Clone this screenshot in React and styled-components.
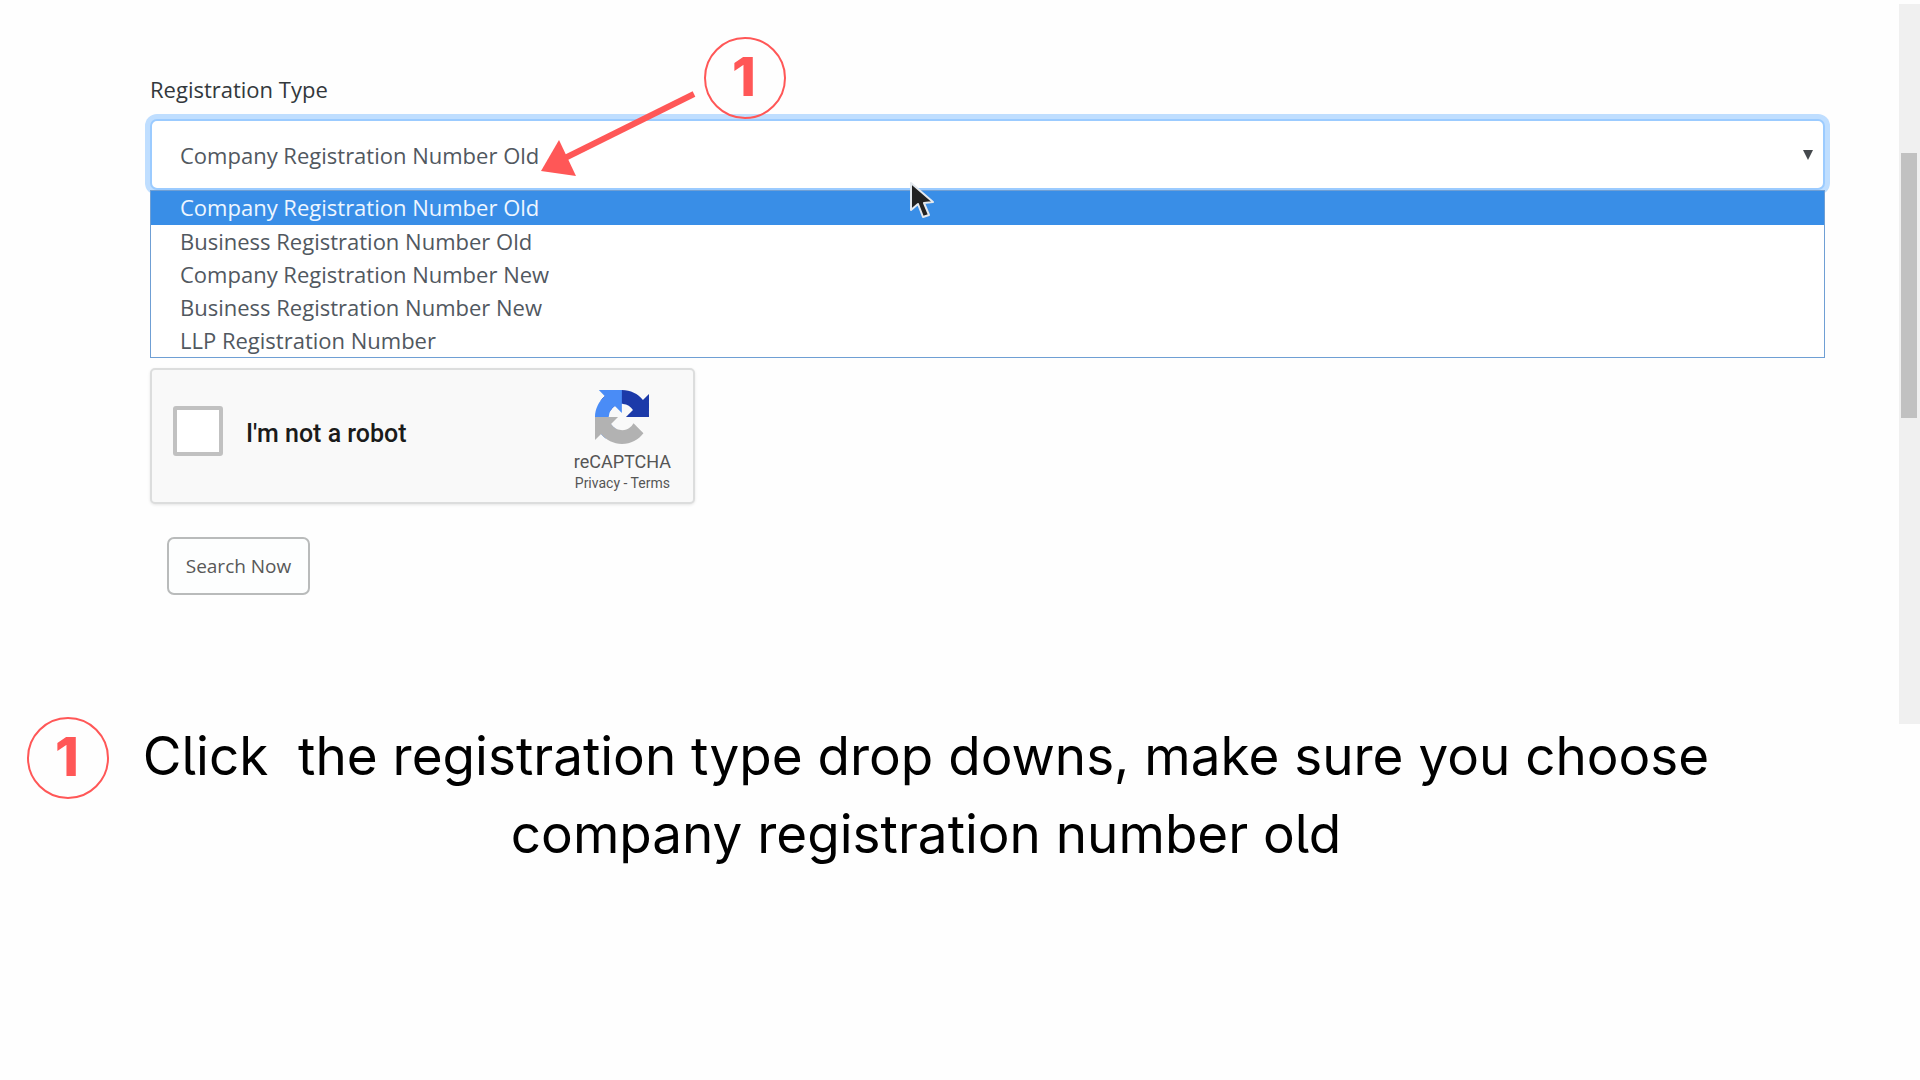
import React from "react";
import styled, { createGlobalStyle } from "styled-components";

const GlobalStyle = createGlobalStyle`
  *, *::before, *::after { box-sizing: border-box; }
  body {
    margin: 0;
    background: #fefefe;
    color: #000;
    font-family: "Open Sans", "Noto Sans", sans-serif;
  }
`;

const coral = "#ff5757";

const Page = styled.div`
  display: grid;
  grid-template-columns: minmax(0, 1fr) 21px;
  align-items: start;
`;

const Main = styled.main`
  display: flex;
  flex-direction: column;
  gap: 122px;
`;

const Form = styled.form`
  display: flex;
  flex-direction: column;
  align-items: flex-start;
  padding: 73px 74px 0 150px;
`;

const Field = styled.div`
  position: relative;
  display: flex;
  flex-direction: column;
  gap: 14px;
  width: 100%;
`;

const Label = styled.label`
  font-size: 22px;
  line-height: 32px;
  color: #33383c;
`;

const SelectBox = styled.div`
  position: relative;
  display: flex;
`;

const Select = styled.select`
  appearance: none;
  width: 100%;
  height: 71px;
  padding: 0 28px;
  border: 2px solid #9bcbff;
  border-radius: 7px;
  outline: none;
  box-shadow: 0 0 0 5px #bfdeff;
  background: #fff;
  color: #51585f;
  font: 22px/32px "Open Sans", "Noto Sans", sans-serif;
`;

const Caret = styled.svg`
  position: absolute;
  right: 11px;
  top: 31px;
  width: 12px;
  height: 10px;
  pointer-events: none;
`;

const Options = styled.ul`
  position: absolute;
  top: 100%;
  left: 0;
  right: 0;
  margin: 0;
  padding: 0;
  list-style: none;
  border: 1px solid #6f9fd4;
  background: #fff;
`;

const Option = styled.li`
  padding: 0 29px ${(p) => (p.$active ? "1px" : "0")};
  font-size: 22px;
  line-height: 33px;
  color: ${(p) => (p.$active ? "#eef6ff" : "#51585f")};
  background: ${(p) => (p.$active ? "#398ee7" : "transparent")};
`;

const Captcha = styled.div`
  display: flex;
  align-items: flex-start;
  width: 545px;
  height: 136px;
  margin-top: 178px;
  padding: 20px 22px 0 21px;
  border: 2px solid #dcdddd;
  border-radius: 5px;
  background: #f9f9f9;
  box-shadow: 0 1px 3px #0000001a;
`;

const Check = styled.div`
  display: flex;
  flex: 1;
  align-items: center;
  gap: 23px;
  padding-top: 16px;
`;

const Tick = styled.input`
  appearance: none;
  width: 50px;
  height: 50px;
  margin: 0;
  border: 4px solid #c1c1c1;
  border-radius: 3px;
  background: #fff;
`;

const TickLabel = styled.label`
  padding-top: 5px;
  font: 500 25px/32px Roboto, sans-serif;
  color: #1b1b1b;
`;

const Brand = styled.div`
  display: flex;
  flex-direction: column;
  align-items: center;
  font-family: Roboto, sans-serif;
  color: #555;
`;

const BrandLogo = styled.svg`
  width: 54px;
  height: 54px;
  margin-bottom: 8px;
`;

const BrandName = styled.span`
  font-size: 18px;
  line-height: 20px;
`;

const Legal = styled.span`
  font-size: 14px;
  line-height: 22px;
`;

const LegalLink = styled.a`
  color: inherit;
  text-decoration: none;
`;

const SearchButton = styled.button`
  margin: 33px 0 0 17px;
  width: 143px;
  height: 58px;
  padding: 0;
  border: 2px solid #b9bbbb;
  border-radius: 7px;
  background: #fdfefe;
  color: #585858;
  font: 19px/28px "Open Sans", "Noto Sans", sans-serif;
`;

const Badge = styled.span`
  display: flex;
  flex: none;
  align-items: center;
  justify-content: center;
  width: 82px;
  height: 82px;
  padding: 0 2px 2px 0;
  border: 2px solid ${coral};
  border-radius: 50%;
  color: ${coral};
  font: 800 54px/54px Inter, sans-serif;
`;

const Callout = styled.div`
  position: absolute;
  left: 391px;
  top: -36px;
  display: flex;
  pointer-events: none;
`;

const CalloutArrow = styled.svg`
  width: 163px;
  height: 144px;
`;

const Pointer = styled.svg`
  position: absolute;
  left: 758px;
  top: 61px;
  width: 28px;
  height: 42px;
  z-index: 1;
  pointer-events: none;
`;

const Instruction = styled.section`
  display: flex;
  align-items: flex-start;
  gap: 20px;
  padding: 0 176px 0 27px;
`;

const InstructionText = styled.p`
  flex: 1;
  margin: 0;
  text-align: center;
  white-space: pre-wrap;
  font: 53px/78px Inter, sans-serif;
  font-feature-settings: "cv05";
`;

const ScrollTrack = styled.div`
  height: 720px;
  margin-top: 4px;
  padding: 149px 3px 0 2px;
  background: #f0f0f0;
`;

const ScrollThumb = styled.div`
  height: 265px;
  background: #c1c1c1;
`;

const types = [
  "Company Registration Number Old",
  "Business Registration Number Old",
  "Company Registration Number New",
  "Business Registration Number New",
  "LLP Registration Number",
];

function RecaptchaLogo() {
  return (
    <BrandLogo viewBox="0 0 64 64" aria-hidden="true">
      <path
        fill="#1c3aa9"
        d="M64 31.955l-.033-1.37V4.687l-7.16 7.16C50.948 4.674 42.033.093 32.05.093c-10.4 0-19.622 4.96-25.458 12.64l11.736 11.86a15.55 15.55 0 0 1 4.754-5.334c2.05-1.6 4.952-2.906 8.968-2.906.485 0 .86.057 1.135.163 4.976.393 9.288 3.14 11.828 7.124l-8.307 8.307L64 31.953"
      />
      <path
        fill="#4a8cf6"
        d="M31.862.094l-1.37.033H4.594l7.16 7.16C4.58 13.147 0 22.06 0 32.046c0 10.4 4.96 19.622 12.64 25.458L24.5 45.768a15.55 15.55 0 0 1-5.334-4.754c-1.6-2.05-2.906-4.952-2.906-8.968 0-.485.057-.86.163-1.135.393-4.976 3.14-9.288 7.124-11.828l8.307 8.307L31.86.095"
      />
      <path
        fill="#b2b2b2"
        d="M.001 32.045l.033 1.37v25.898l7.16-7.16c5.86 7.173 14.774 11.754 24.76 11.754 10.4 0 19.622-4.96 25.458-12.64l-11.736-11.86a15.55 15.55 0 0 1-4.754 5.334c-2.05 1.6-4.952 2.906-8.968 2.906-.485 0-.86-.057-1.135-.163-4.976-.393-9.288-3.14-11.828-7.124l8.307-8.307c-10.522.04-22.4.066-27.295-.005"
      />
    </BrandLogo>
  );
}

export default function App() {
  return (
    <>
      <GlobalStyle />
      <Page>
        <Main>
          <Form onSubmit={(e) => e.preventDefault()}>
            <Field>
              <Label htmlFor="registration-type">Registration Type</Label>
              <SelectBox>
                <Select id="registration-type" defaultValue={types[0]}>
                  {types.map((t) => (
                    <option key={t}>{t}</option>
                  ))}
                </Select>
                <Caret viewBox="0 0 12 10" aria-hidden="true">
                  <path d="M1 0h10L6 10z" fill="#45494d" />
                </Caret>
                <Options>
                  {types.map((t, i) => (
                    <Option key={t} $active={i === 0}>
                      {t}
                    </Option>
                  ))}
                </Options>
                <Pointer viewBox="0 0 28 42" aria-hidden="true">
                  <path
                    d="M3 3v27l7-6 5 13 6-2-5-12 9-1z"
                    fill="#222"
                    stroke="#e4e9ee"
                    strokeWidth="2"
                    strokeLinejoin="round"
                  />
                </Pointer>
              </SelectBox>
              <Callout>
                <CalloutArrow viewBox="0 0 163 144" aria-hidden="true">
                  <path d="M153 57L24 121" stroke={coral} strokeWidth="6" />
                  <path d="M0 134L18 103L35 139z" fill={coral} />
                </CalloutArrow>
                <Badge>1</Badge>
              </Callout>
            </Field>
            <Captcha>
              <Check>
                <Tick type="checkbox" id="not-robot" />
                <TickLabel htmlFor="not-robot">I'm not a robot</TickLabel>
              </Check>
              <Brand>
                <RecaptchaLogo />
                <BrandName>reCAPTCHA</BrandName>
                <Legal>
                  <LegalLink href="#privacy">Privacy</LegalLink> -{" "}
                  <LegalLink href="#terms">Terms</LegalLink>
                </Legal>
              </Brand>
            </Captcha>
            <SearchButton type="submit">Search Now</SearchButton>
          </Form>
          <Instruction>
            <Badge>1</Badge>
            <InstructionText>
              {"Click  the registration type drop downs, make sure you choose company registration number old"}
            </InstructionText>
          </Instruction>
        </Main>
        <ScrollTrack>
          <ScrollThumb />
        </ScrollTrack>
      </Page>
    </>
  );
}
